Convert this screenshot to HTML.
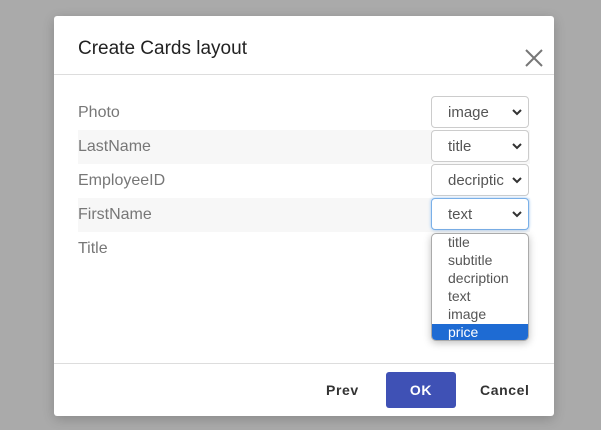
<!DOCTYPE html>
<html><head><style>
body{margin:0;width:601px;height:430px;background:#aaaaaa;font-family:"Liberation Sans",Roboto,sans-serif;position:relative;overflow:hidden}
.dlg{position:absolute;left:54px;top:16px;width:500px;height:400px;background:#fff;border-radius:3px;box-shadow:0 3px 12px rgba(0,0,0,.2)}
.t{position:absolute;left:24px;top:22px;font-size:19px;color:#222}
.x{position:absolute;left:470px;top:32px}
.hl{position:absolute;left:0;right:0;top:58px;border-top:1px solid #ddd}
.fl{position:absolute;left:0;right:0;top:347px;border-top:1px solid #ddd}
.row{position:absolute;left:24px;width:452px;height:34px;font-size:16px;color:#777;line-height:34px}
.row.g{background:#f7f7f7}
.sel{position:absolute;left:377px;height:32px;border:1px solid #ccc;border-radius:4px;background:#fff;font-size:15px;color:#555;line-height:32px;padding-left:16px;box-sizing:border-box;width:98px;overflow:hidden;white-space:nowrap}
.sel.f{border-color:#7ab0e8;box-shadow:0 0 3px #9cc5f0}
.sel svg{position:absolute;right:6px;top:12px}
.dd{position:absolute;left:377px;top:217px;width:98px;height:108px;border:1px solid #aaa;border-radius:5px;background:#fff;box-sizing:border-box;font-size:14px;color:#555;overflow:hidden;box-shadow:0 2px 8px rgba(0,0,0,.25)}
.dd div{height:18px;line-height:17px;padding-left:16px}
.dd .s{background:#1e6bd3;color:#fff}
.b{position:absolute;top:356px;font-size:14px;letter-spacing:0.6px;font-weight:bold;color:#333;line-height:36px}
.ok{left:332px;width:70px;height:36px;background:#3f51b5;color:#fff;text-align:center;border-radius:3px}
</style></head><body>
<div class="dlg">
<div class="t">Create Cards layout</div>
<svg class="x" width="20" height="20" viewBox="0 0 20 20"><path d="M2 2L18 18M18 2L2 18" stroke="#777" stroke-width="2"/></svg>
<div class="hl"></div>
<div class="row" style="top:80px">Photo</div>
<div class="row g" style="top:114px">LastName</div>
<div class="row" style="top:148px">EmployeeID</div>
<div class="row g" style="top:182px">FirstName</div>
<div class="row" style="top:216px">Title</div>
<div class="sel" style="top:80px">image<svg width="10" height="7"><path d="M1 1L5 5L9 1" stroke="#333" stroke-width="2" fill="none"/></svg></div>
<div class="sel" style="top:114px">title<svg width="10" height="7"><path d="M1 1L5 5L9 1" stroke="#333" stroke-width="2" fill="none"/></svg></div>
<div class="sel" style="top:148px">decriptic<svg width="10" height="7"><path d="M1 1L5 5L9 1" stroke="#333" stroke-width="2" fill="none"/></svg></div>
<div class="sel f" style="top:182px">text<svg width="10" height="7"><path d="M1 1L5 5L9 1" stroke="#333" stroke-width="2" fill="none"/></svg></div>
<div class="dd"><div>title</div><div>subtitle</div><div>decription</div><div>text</div><div>image</div><div class="s">price</div></div>
<div class="fl"></div>
<div class="b" style="left:272px">Prev</div>
<div class="b ok">OK</div>
<div class="b" style="left:426px">Cancel</div>
</div>
</body></html>
